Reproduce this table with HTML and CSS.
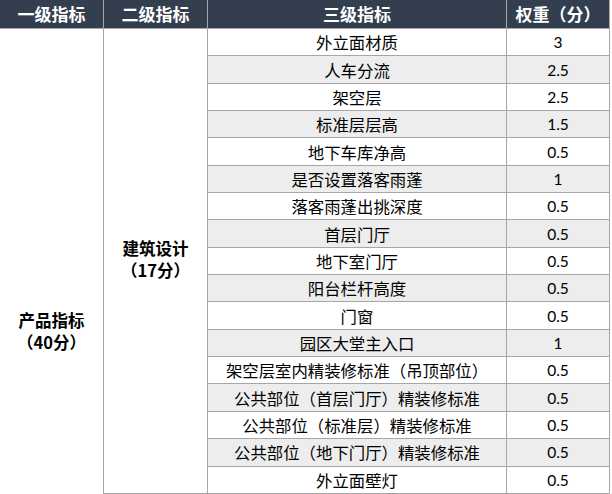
FILE: index.html
```html
<!DOCTYPE html>
<html lang="zh-CN">
<head>
<meta charset="utf-8">
<link rel="stylesheet" href="styles.css">
</head>
<body>
<div class="sheet">
  <div class="hd">一级指标</div>
  <div class="hd">二级指标</div>
  <div class="hd">三级指标</div>
  <div class="hd">权重（分）</div>

  <div class="l1"><p class="lbl">产品指标<br>（40分）</p></div>
  <div class="l2"><p class="lbl">建筑设计<br>（17分）</p></div>

  <div class="c3">外立面材质</div><div class="c4">3</div>
  <div class="c3 alt">人车分流</div><div class="c4 alt">2.5</div>
  <div class="c3">架空层</div><div class="c4">2.5</div>
  <div class="c3 alt">标准层层高</div><div class="c4 alt">1.5</div>
  <div class="c3">地下车库净高</div><div class="c4">0.5</div>
  <div class="c3 alt">是否设置落客雨蓬</div><div class="c4 alt">1</div>
  <div class="c3">落客雨蓬出挑深度</div><div class="c4">0.5</div>
  <div class="c3 alt">首层门厅</div><div class="c4 alt">0.5</div>
  <div class="c3">地下室门厅</div><div class="c4">0.5</div>
  <div class="c3 alt">阳台栏杆高度</div><div class="c4 alt">0.5</div>
  <div class="c3">门窗</div><div class="c4">0.5</div>
  <div class="c3 alt">园区大堂主入口</div><div class="c4 alt">1</div>
  <div class="c3">架空层室内精装修标准（吊顶部位）</div><div class="c4">0.5</div>
  <div class="c3 alt">公共部位（首层门厅）精装修标准</div><div class="c4 alt">0.5</div>
  <div class="c3">公共部位（标准层）精装修标准</div><div class="c4">0.5</div>
  <div class="c3 alt">公共部位（地下门厅）精装修标准</div><div class="c4 alt">0.5</div>
  <div class="c3">外立面壁灯</div><div class="c4">0.5</div>
</div>
</body>
</html>
```
FILE: styles.css
```css
html, body {
  margin: 0;
  padding: 0;
  background: #ffffff;
}
body {
  width: 612px;
  height: 494px;
  overflow: hidden;
  font-family: "Noto Sans CJK SC", "Noto Sans", sans-serif;
  color: #000000;
}
.sheet {
  display: grid;
  width: 610px;
  grid-template-columns: 104px 104px 299px 103px;
  grid-template-rows: 29px repeat(17, 27.35px);
}
.sheet > div {
  box-sizing: border-box;
  border-right: 1px solid #a6a6a6;
  display: flex;
  align-items: center;
  justify-content: center;
  line-height: 20px;
}
.hd {
  background: #333f4f;
  color: #ffffff;
  font-weight: 700;
  font-size: 17px;
  border-bottom: 1px solid #a6a6a6;
  padding-bottom: 1px;
}
.l1, .l2 {
  font-weight: 700;
  font-size: 16.5px;
  grid-row: 2 / span 17;
}
.lbl {
  margin: 0;
  text-align: center;
  line-height: 22px;
}
.l1 {
  grid-column: 1;
  padding-top: 140px;
}
.l2 {
  grid-column: 2;
  border-bottom: 1px solid #a6a6a6;
  padding-bottom: 4px;
}
.c3, .c4 {
  border-bottom: 1px solid #a6a6a6;
  background: #ffffff;
}
.c3 {
  grid-column: 3;
  font-size: 16.4px;
}
.c4 {
  grid-column: 4;
  font-family: "Lato", "Noto Sans CJK SC", sans-serif;
  font-size: 15.5px;
}
.alt {
  background: #ededed;
}
```
